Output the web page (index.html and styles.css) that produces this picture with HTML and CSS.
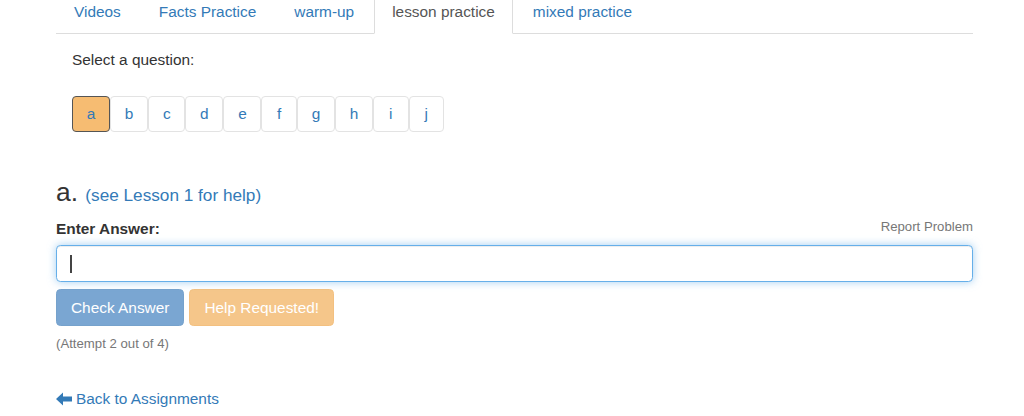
FILE: index.html
```html
<!DOCTYPE html>
<html lang="en">
<head>
<meta charset="utf-8">
<title>Lesson practice</title>
<link rel="stylesheet" href="styles.css">
</head>
<body>
<div class="container">
  <ul class="tabs">
    <li><a href="#">Videos</a></li>
    <li><a href="#">Facts Practice</a></li>
    <li><a href="#">warm-up</a></li>
    <li class="active"><a href="#">lesson practice</a></li>
    <li><a href="#">mixed practice</a></li>
  </ul>
  <div class="panel">
    <p class="select-label">Select a question:</p>
    <div class="qgroup">
      <a class="qbtn active" href="#">a</a>
      <a class="qbtn" href="#">b</a>
      <a class="qbtn" href="#">c</a>
      <a class="qbtn" href="#">d</a>
      <a class="qbtn" href="#">e</a>
      <a class="qbtn" href="#">f</a>
      <a class="qbtn" href="#">g</a>
      <a class="qbtn" href="#">h</a>
      <a class="qbtn" href="#">i</a>
      <a class="qbtn" href="#">j</a>
    </div>
  </div>
  <h3 class="qtitle">a. <a class="help" href="#">(see Lesson 1 for help)</a></h3>
  <div class="label-row">
    <label class="answer-label" for="answer">Enter Answer:</label>
    <a class="report" href="#">Report Problem</a>
  </div>
  <div class="input-wrap">
    <input id="answer" class="answer" type="text">
    <span class="caret"></span>
  </div>
  <div class="actions">
    <button class="btn btn-primary" disabled>Check Answer</button>
    <button class="btn btn-warning" disabled>Help Requested!</button>
  </div>
  <p class="attempt">(Attempt 2 out of 4)</p>
  <a class="back" href="#"><svg class="arrow" width="16" height="14" viewBox="0 0 16 14"><polygon points="0,7 7,0.5 7,4.5 16,4.5 16,9.5 7,9.5 7,13.5" fill="#337ab7"/></svg>Back to Assignments</a>
</div>
</body>
</html>
```

FILE: styles.css
```css
html, body {
  margin: 0;
  padding: 0;
  background: #fff;
}
body {
  font-family: "Liberation Sans", Arial, sans-serif;
  font-size: 15.4px;
  line-height: 22px;
  color: #333;
}
a {
  color: #337ab7;
  text-decoration: none;
}
.container {
  width: 917px;
  margin-left: 56px;
}
.tabs {
  list-style: none;
  margin: 0;
  padding: 0;
  display: flex;
  border-bottom: 1px solid #ddd;
  height: 33px;
}
.tabs li {
  margin-right: 2px;
}
.tabs li a {
  display: block;
  padding: 1px 18px 10px;
  height: 22px;
  line-height: 22px;
}
.tabs li.active a {
  color: #555;
  background: #fff;
  border: 1px solid #ddd;
  border-top: 0;
  border-bottom-color: #fff;
  padding: 1px 17px 10px;
}
.panel {
  padding-left: 16px;
}
.select-label {
  margin: 15px 0 0;
}
.qgroup {
  display: flex;
  margin-top: 25px;
}
.qbtn {
  display: block;
  height: 34px;
  line-height: 34px;
  padding: 0 13.75px;
  min-width: 6px;
  text-align: center;
  border: 1px solid #e3e3e3;
  border-radius: 4px;
  background: #fff;
}
.qbtn.active {
  background: #f6bc72;
  border-color: #555;
}
.qtitle {
  margin: 46px 0 0;
  font-size: 26.4px;
  font-weight: normal;
  line-height: 29px;
  color: #333;
}
.help {
  font-size: 17.2px;
}
.label-row {
  display: flex;
  justify-content: space-between;
  align-items: center;
  margin-top: 8px;
  height: 22px;
}
.answer-label {
  font-weight: bold;
}
.report {
  font-size: 13.2px;
  color: #777;
  position: relative;
  top: -2px;
}
.input-wrap {
  position: relative;
  margin-top: 5px;
}
.answer {
  display: block;
  box-sizing: border-box;
  width: 100%;
  height: 37px;
  padding: 6px 13px;
  font: inherit;
  border: 1px solid #66afe9;
  border-radius: 4.4px;
  outline: 0;
  box-shadow: inset 0 1px 1px rgba(0,0,0,.075), 0 0 8px rgba(102,175,233,.6);
}
.caret {
  position: absolute;
  left: 14px;
  top: 10px;
  width: 1.5px;
  height: 18px;
  background: #444;
}
.actions {
  display: flex;
  gap: 5px;
  margin-top: 7px;
}
.btn {
  height: 37px;
  padding: 0 14px;
  font: inherit;
  color: #fff;
  border: 1px solid transparent;
  border-radius: 4.4px;
  cursor: not-allowed;
}
.btn-primary {
  background: #7aa6d2;
  border-color: #76a2cc;
}
.btn-warning {
  background: #f5c68a;
  border-color: #f3c080;
}
.attempt {
  margin: 8px 0 0;
  font-size: 13.2px;
  line-height: 19px;
  color: #777;
}
.back {
  display: inline-flex;
  align-items: center;
  gap: 4px;
  margin-top: 35px;
}
.arrow {
  display: block;
}
```
